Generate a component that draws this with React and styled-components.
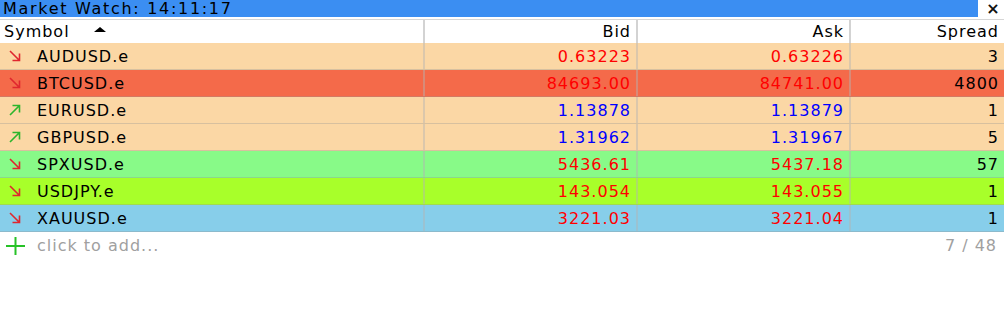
import React from 'react'
import styled, { createGlobalStyle } from 'styled-components'

const GlobalStyle = createGlobalStyle`
  body {
    margin: 0;
    background: #ffffff;
    font-family: "DejaVu Sans", Verdana, sans-serif;
  }
`

const quotes = [
  { symbol: 'AUDUSD.e', bid: '0.63223', ask: '0.63226', spread: '3', dir: 'down', color: 'red', bg: '#fbd7a5' },
  { symbol: 'BTCUSD.e', bid: '84693.00', ask: '84741.00', spread: '4800', dir: 'down', color: 'red', bg: '#f46a4a' },
  { symbol: 'EURUSD.e', bid: '1.13878', ask: '1.13879', spread: '1', dir: 'up', color: 'blue', bg: '#fbd7a5' },
  { symbol: 'GBPUSD.e', bid: '1.31962', ask: '1.31967', spread: '5', dir: 'up', color: 'blue', bg: '#fbd7a5' },
  { symbol: 'SPXUSD.e', bid: '5436.61', ask: '5437.18', spread: '57', dir: 'down', color: 'red', bg: '#88fa88' },
  { symbol: 'USDJPY.e', bid: '143.054', ask: '143.055', spread: '1', dir: 'down', color: 'red', bg: '#a8ff2a' },
  { symbol: 'XAUUSD.e', bid: '3221.03', ask: '3221.04', spread: '1', dir: 'down', color: 'red', bg: '#87ceea' },
]

const Arrow = ({ dir }) =>
  dir === 'down' ? (
    <svg width="14" height="14" viewBox="0 0 14 14">
      <path d="M2 2 L11.5 11.5 M11.5 4.5 V11.5 H4.5" stroke="#e0262e" strokeWidth="1.6" fill="none" />
    </svg>
  ) : (
    <svg width="14" height="14" viewBox="0 0 14 14">
      <path d="M2 12 L11.5 2.5 M4.5 2.5 H11.5 V9.5" stroke="#2cb52c" strokeWidth="1.6" fill="none" />
    </svg>
  )

const App = () => {
  return (
    <Wrap>
      <GlobalStyle />
      <TitleRow>
        <TitleBar>Market Watch: 14:11:17</TitleBar>
        <Close>×</Close>
      </TitleRow>
      <Table>
        <Header>
          <HeadCell $left>
            Symbol
            <SortMark />
          </HeadCell>
          <HeadCell>Bid</HeadCell>
          <HeadCell>Ask</HeadCell>
          <HeadCell $last>Spread</HeadCell>
        </Header>
        {quotes.map(q => (
          <Row key={q.symbol} $bg={q.bg}>
            <SymCell>
              <Arrow dir={q.dir} />
              <span>{q.symbol}</span>
            </SymCell>
            <Cell $color={q.color}>{q.bid}</Cell>
            <Cell $color={q.color}>{q.ask}</Cell>
            <Cell $last>{q.spread}</Cell>
          </Row>
        ))}
        <AddRow>
          <AddLabel>
            <svg width="21" height="20" viewBox="0 0 21 20">
              <path d="M10.5 1 V19 M1 10 H20" stroke="#27c227" strokeWidth="2" fill="none" />
            </svg>
            <span>click to add...</span>
          </AddLabel>
          <Count>7 / 48</Count>
        </AddRow>
      </Table>
    </Wrap>
  )
}

export default App

const Wrap = styled.div`
  width: 1008px;
  height: 330px;
  background: #ffffff;
  overflow: hidden;
  font-size: 16px;
  letter-spacing: 1px;
`

const TitleRow = styled.div`
  display: flex;
  align-items: flex-start;
  height: 19px;
`

const TitleBar = styled.div`
  flex: 0 0 978px;
  box-sizing: border-box;
  height: 17px;
  background: #3b8ef2;
  color: #000;
  font-size: 16px;
  letter-spacing: 1.7px;
  line-height: 17px;
  padding-left: 3px;
  white-space: nowrap;
`

const Close = styled.div`
  flex: 0 0 30px;
  text-align: center;
  font-size: 16px;
  font-weight: bold;
  letter-spacing: 0;
  line-height: 17px;
  color: #111;
`

const Table = styled.div`
  width: 1004px;
  border-top: 1px solid #d6d6d6;
`

const cols = `425px 213px 213px 153px`

const Header = styled.div`
  display: grid;
  grid-template-columns: ${cols};
  height: 23px;
  background: #ffffff;
`

const HeadCell = styled.div`
  display: flex;
  align-items: center;
  justify-content: ${p => (p.$left ? 'flex-start' : 'flex-end')};
  padding: 0 ${p => (p.$left ? '0' : '5px')} 0 ${p => (p.$left ? '4px' : '0')};
  color: #000;
  border-right: ${p => (p.$last ? 'none' : '2px solid #d3d3d3')};
`

const SortMark = styled.span`
  width: 0;
  height: 0;
  margin-left: 24px;
  margin-top: -4px;
  border-left: 6px solid transparent;
  border-right: 6px solid transparent;
  border-bottom: 5px solid #000;
`

const Row = styled.div`
  display: grid;
  grid-template-columns: ${cols};
  height: 27px;
  box-sizing: border-box;
  background: ${p => p.$bg};
  border-bottom: 1px solid rgba(150, 150, 150, 0.35);
`

const SymCell = styled.div`
  display: flex;
  align-items: center;
  gap: 15px;
  padding-left: 8px;
  color: #000;
  border-right: 2px solid rgba(180, 180, 180, 0.45);
`

const Cell = styled.div`
  display: flex;
  align-items: center;
  justify-content: flex-end;
  padding-right: 5px;
  color: ${p => (p.$color === 'red' ? '#ff0000' : p.$color === 'blue' ? '#0000ff' : '#000')};
  border-right: ${p => (p.$last ? 'none' : '2px solid rgba(180, 180, 180, 0.45)')};
`

const AddRow = styled.div`
  display: flex;
  align-items: center;
  justify-content: space-between;
  height: 27px;
  color: #a0a0a0;
`

const AddLabel = styled.div`
  display: flex;
  align-items: center;
  gap: 11px;
  padding-left: 5px;
`

const Count = styled.div`
  padding-right: 7px;
`
